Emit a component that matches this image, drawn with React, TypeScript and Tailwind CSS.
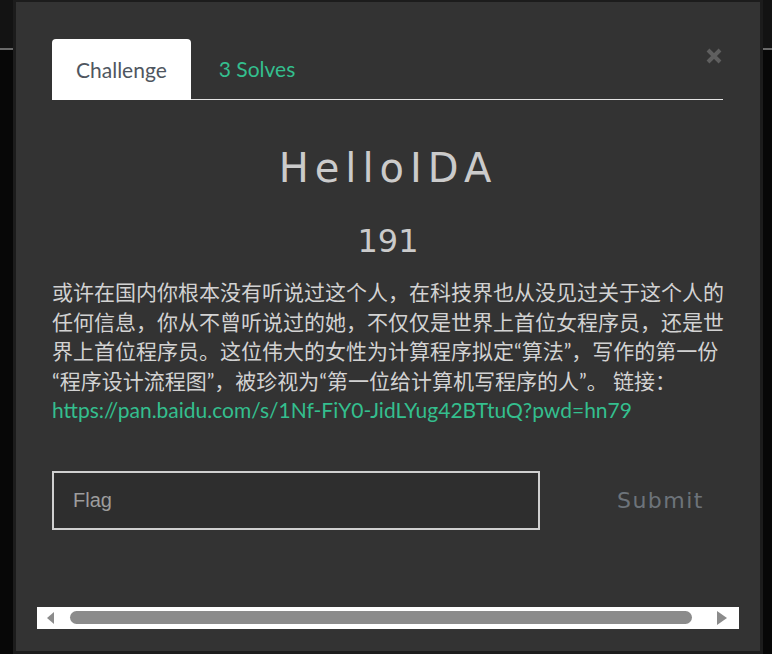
const description =
  "或许在国内你根本没有听说过这个人，在科技界也从没见过关于这个人的任何信息，你从不曾听说过的她，不仅仅是世界上首位女程序员，还是世界上首位程序员。这位伟大的女性为计算程序拟定“算法”，写作的第一份\u200B“程序设计流程图”，被珍视为“第一位给计算机写程序的人”。 链接：";

const link = "https://pan.baidu.com/s/1Nf-FiY0-JidLYug42BTtuQ?pwd=hn79";

const App = () => {
  return (
    <div className="relative w-[772px] h-[654px] overflow-hidden bg-[#070707]">
      {/* dimmed page behind the modal */}
      <div className="h-[48px] bg-[#131313]" />
      <div className="h-[2px] bg-[#6a6a6a]" />

      <div className="absolute left-[13px] top-0 w-[750px] h-[654px] bg-[#1c1c1c] pt-[2px] px-[3px] pb-[3px]">
        <div className="relative h-full bg-[#333333] pt-[36px] px-[36px] font-['Lato','Noto_Sans_CJK_SC',sans-serif]">
          <button className="absolute right-[36px] top-[44px] w-[20px] h-[20px] flex items-center justify-center">
            <svg width="16" height="16" viewBox="0 0 16 16">
              <path d="M2 2 L14 14 M14 2 L2 14" stroke="#5f5f5f" strokeWidth="4" strokeLinecap="butt" />
            </svg>
          </button>

          <div className="flex items-end border-b border-[#e4e4e4] w-[671px]">
            <div className="h-[61px] -mb-px px-6 flex items-center bg-white rounded-t-[4px] text-[21px] text-[#4f5660]">
              Challenge
            </div>
            <div className="h-[61px] pl-[28px] flex items-center text-[21px] text-[#34bf8e]">3 Solves</div>
          </div>

          <h1 className="mt-[44px] text-center text-[40px] leading-[48px] tracking-[6px] text-[#cbcbcb] font-['DejaVu_Sans',sans-serif]">
            HelloIDA
          </h1>
          <h2 className="mt-[29px] text-center text-[32px] leading-[40px] text-[#cbcbcb] font-['DejaVu_Sans',sans-serif]">
            191
          </h2>

          <p className="mt-[16px] w-[690px] text-[21px] leading-[29.5px] text-[#d2d2d2]">
            {description}
            <span className="whitespace-nowrap text-[#34bf8e]">{link}</span>
          </p>

          <div className="mt-[46px] flex items-center w-[672px]">
            <div className="w-[488px] h-[59px] border-2 border-[#d0d0d0] bg-[#2e2e2e] flex items-center pl-[19px]">
              <span className="text-[20px] text-[#9d9d9d] font-['Liberation_Sans',sans-serif]">Flag</span>
            </div>
            <div className="flex-1 flex justify-end pr-[20px]">
              <span className="text-[22px] tracking-[1.5px] text-[#6d737a] font-['DejaVu_Sans',sans-serif]">
                Submit
              </span>
            </div>
          </div>

          <div className="mt-[77px] -mx-[15px] h-[22px] bg-white flex items-center pl-[10px] pr-[12px]">
            <svg width="7" height="12" viewBox="0 0 7 12">
              <path d="M7 0 L7 12 L0 6 Z" fill="#8b8b8b" />
            </svg>
            <div className="flex-1 h-[13px] rounded-full bg-[#8b8b8b] ml-[16px] mr-[25px]" />
            <svg width="10" height="14" viewBox="0 0 10 14">
              <path d="M0 0 L0 14 L10 7 Z" fill="#8b8b8b" />
            </svg>
          </div>
        </div>
      </div>
    </div>
  );
};

export default App;
